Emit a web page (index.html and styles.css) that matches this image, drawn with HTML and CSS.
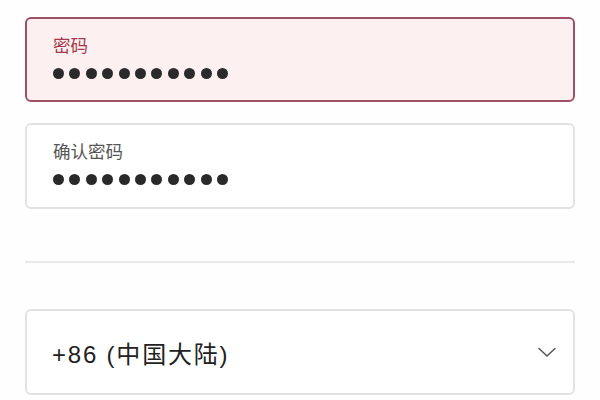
FILE: index.html
```html
<!DOCTYPE html>
<html lang="zh">
<head>
<meta charset="utf-8">
<link rel="stylesheet" href="styles.css">
</head>
<body>
<div class="form">
  <div class="field field-error">
    <div class="label">密码</div>
    <div class="dots"><span></span><span></span><span></span><span></span><span></span><span></span><span></span><span></span><span></span><span></span><span></span></div>
  </div>
  <div class="field">
    <div class="label">确认密码</div>
    <div class="dots"><span></span><span></span><span></span><span></span><span></span><span></span><span></span><span></span><span></span><span></span><span></span></div>
  </div>
  <hr class="divider">
  <div class="select">
    <span class="value">+86 (中国大陆)</span>
    <svg class="chevron" width="20" height="12" viewBox="0 0 20 12"><path d="M2 2.5 L10 10 L18 2.5" fill="none" stroke="#5a5a5a" stroke-width="1.6" stroke-linecap="round" stroke-linejoin="round"/></svg>
  </div>
</div>
</body>
</html>
```
FILE: styles.css
```css
html, body {
  margin: 0;
  background: #fefefe;
  font-family: "Noto Sans CJK SC", "Noto Sans", sans-serif;
}
.form {
  display: flex;
  flex-direction: column;
  padding: 17px 25px 0 25px;
}
.field {
  box-sizing: border-box;
  height: 86px;
  border: 2px solid #e2e2e2;
  border-radius: 6px;
  background: #fff;
  padding: 15px 0 0 26px;
}
.field + .field {
  margin-top: 21px;
}
.field-error {
  height: 85px;
  border-color: #9e5064;
  background: #fdf0f0;
}
.label {
  font-size: 17.5px;
  line-height: 22px;
  color: #555;
}
.field-error .label {
  color: #a13a4c;
}
.dots {
  display: flex;
  gap: 5.4px;
  margin-top: 12px;
}
.dots span {
  width: 11px;
  height: 11px;
  border-radius: 50%;
  background: #2a2a2a;
}
.divider {
  border: none;
  border-top: 2px solid #e8e8e8;
  margin: 52px 0 46px 0;
}
.select {
  box-sizing: border-box;
  height: 86px;
  border: 2px solid #e2e2e2;
  border-radius: 6px;
  background: #fff;
  display: flex;
  align-items: center;
  justify-content: space-between;
  padding: 0 16px 0 25px;
}
.value {
  font-family: "Liberation Sans", "Noto Sans CJK SC", sans-serif;
  font-size: 24px;
  letter-spacing: 1.8px;
  color: #222;
}
```
